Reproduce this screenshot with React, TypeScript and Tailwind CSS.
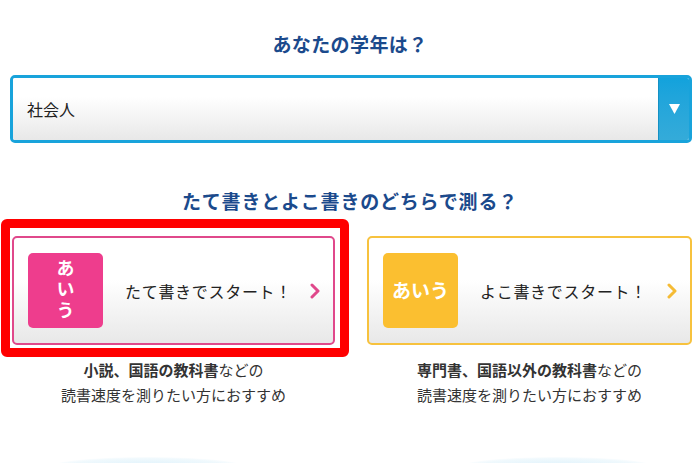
import React from 'react';

const font = { fontFamily: '"Noto Sans CJK JP", "Noto Sans", sans-serif' };

type ModeCardProps = {
  label: string;
  tone: 'pink' | 'yellow';
  vertical?: boolean;
  highlighted?: boolean;
};

const Chevron = ({ color }: { color: string }) => (
  <svg width="12" height="16" viewBox="0 0 12 16" className="shrink-0">
    <polyline points="3,2 9,8 3,14" fill="none" stroke={color} strokeWidth="3" strokeLinecap="round" strokeLinejoin="round" />
  </svg>
);

const ModeCard = ({ label, tone, vertical, highlighted }: ModeCardProps) => {
  const pink = tone === 'pink';
  return (
    <div className="relative">
      <div
        className={`flex h-[109px] items-center rounded-[5px] border-2 bg-gradient-to-b from-white from-40% to-[#e8e8e8] pl-[14px] pr-[12px] ${
          pink ? 'border-[#e0488b]' : 'border-[#f7c23e]'
        }`}
      >
        <div
          className={`flex h-[75px] w-[75px] shrink-0 items-center justify-center rounded-[5px] font-bold text-white ${
            pink ? 'bg-[#ee3d8d]' : 'bg-[#fbbf30]'
          }`}
        >
          {vertical ? (
            <span className="text-[18px] leading-[24px] tracking-[3px] [writing-mode:vertical-rl]">あいう</span>
          ) : (
            <span className="text-[19px]">あいう</span>
          )}
        </div>
        <div className="ml-[22px] flex-1 text-[16px] tracking-[0.7px] text-[#222]">{label}</div>
        <Chevron color={pink ? '#e0488b' : '#f5bb35'} />
      </div>
      {highlighted && (
        <div className="pointer-events-none absolute -left-[11px] -top-[17px] -right-[14px] -bottom-[12px] rounded-[6px] border-[9px] border-[#ff0000]" />
      )}
    </div>
  );
};

export default function App() {
  return (
    <div className="relative h-[463px] w-[700px] overflow-hidden bg-white" style={font}>
      <div className="px-[10px] pt-[30px]">
        <h2 className="text-center text-[19px] font-bold leading-[28px] tracking-[0.4px] text-[#1b4a8c]">あなたの学年は？</h2>

        <div className="mt-[17px] flex h-[68px] w-[682px] overflow-hidden rounded-[5px] border-[3px] border-[#18a3db]">
          <div className="flex flex-1 items-center bg-gradient-to-b from-white from-30% to-[#e8e8e8] pl-[14px] text-[16px] text-[#222]">
            社会人
          </div>
          <div className="flex w-[31px] items-center justify-center border-l border-[#1591c4] bg-gradient-to-b from-[#12a2dc] to-[#34abd9]">
            <svg width="11" height="10" viewBox="0 0 11 10">
              <polygon points="0,0 11,0 5.5,10" fill="#fff" />
            </svg>
          </div>
        </div>

        <h2 className="mt-[44px] text-center text-[19px] font-bold leading-[28px] tracking-[0.8px] text-[#1b4a8c]">
          たて書きとよこ書きのどちらで測る？
        </h2>

        <div className="ml-[2px] mt-[21px] grid grid-cols-[323px_325px] gap-[32px]">
          <div>
            <ModeCard label="たて書きでスタート！" tone="pink" vertical highlighted />
            <p className="mt-[12px] text-center text-[15px] leading-[25px] text-[#333]">
              <span className="font-bold">小説、国語の教科書</span>などの
              <br />
              読書速度を測りたい方におすすめ
            </p>
          </div>
          <div>
            <ModeCard label="よこ書きでスタート！" tone="yellow" />
            <p className="mt-[12px] text-center text-[15px] leading-[25px] text-[#333]">
              <span className="font-bold">専門書、国語以外の教科書</span>などの
              <br />
              読書速度を測りたい方におすすめ
            </p>
          </div>
        </div>
      </div>

      <div className="mt-[50px] flex gap-[215px] pl-[50px]">
        <div className="h-[20px] w-[195px] rounded-[50%] bg-[radial-gradient(ellipse_at_center,#dcf1fb_0%,#f0f9fd_60%,transparent_75%)]" />
        <div className="h-[20px] w-[195px] rounded-[50%] bg-[radial-gradient(ellipse_at_center,#dcf1fb_0%,#f0f9fd_60%,transparent_75%)]" />
      </div>
    </div>
  );
}
